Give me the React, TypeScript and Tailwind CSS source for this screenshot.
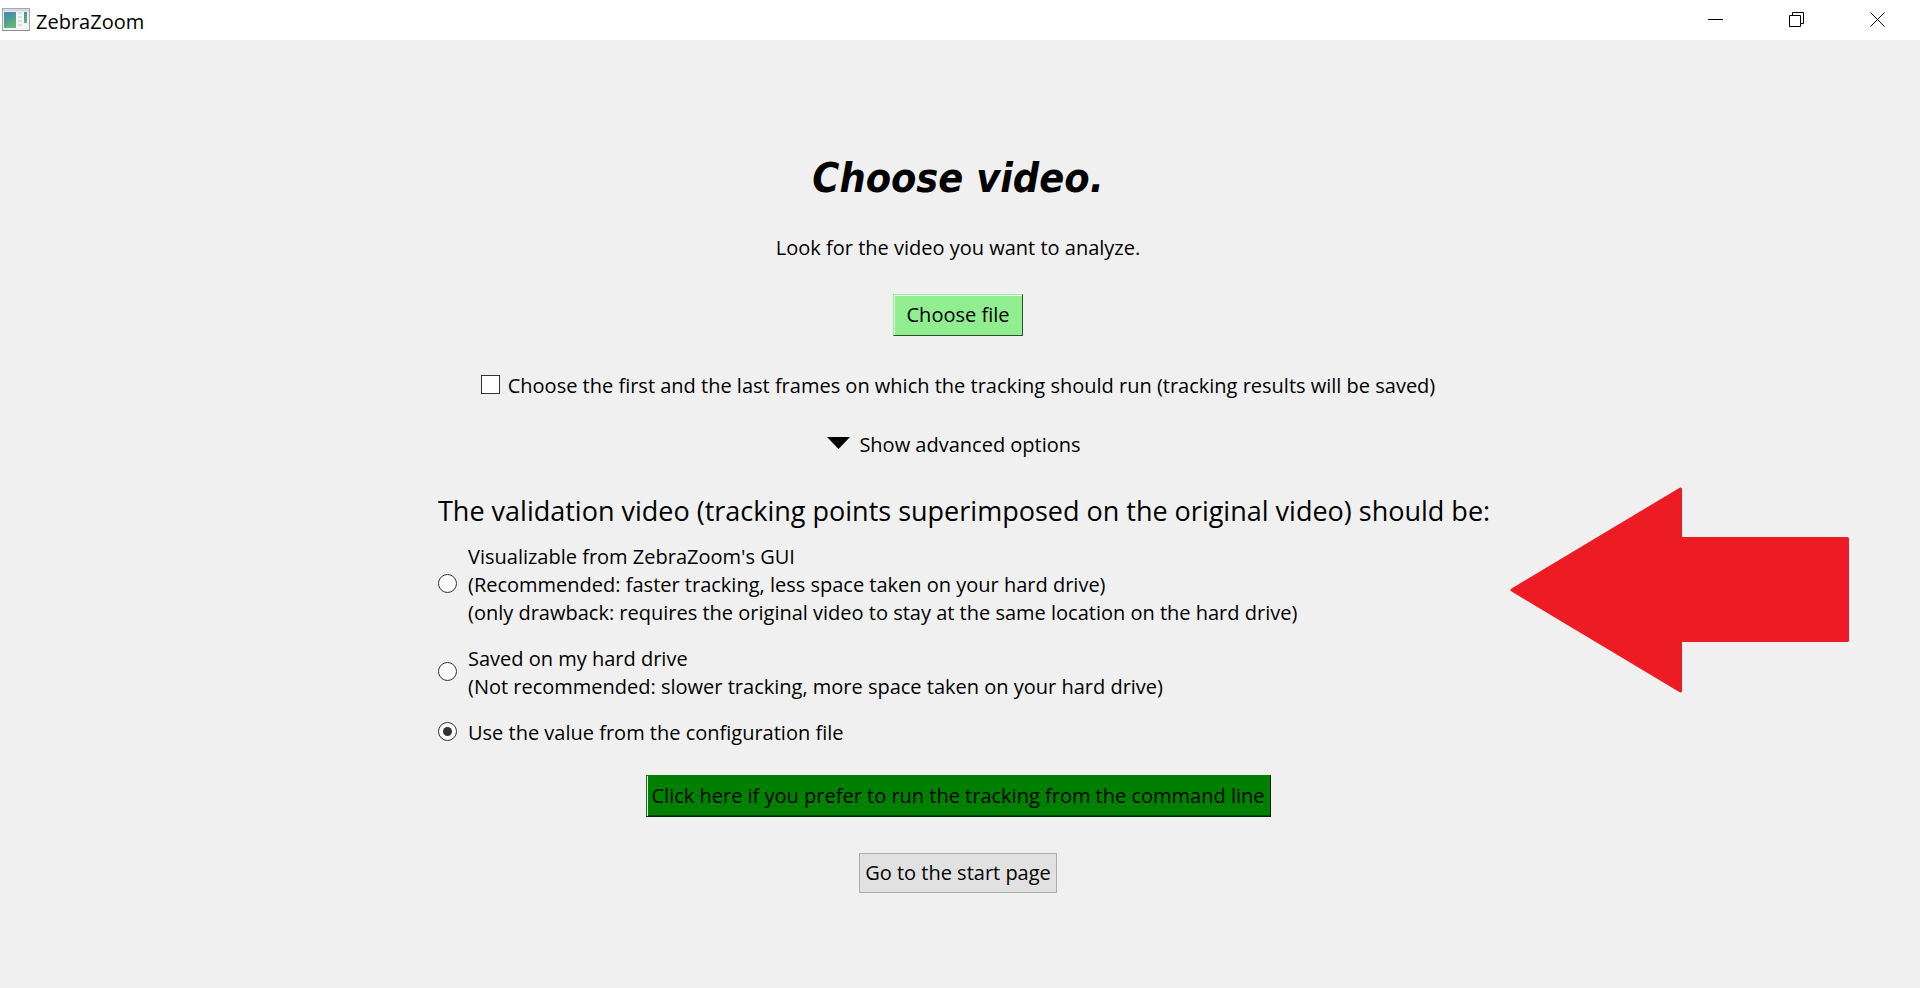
import { useState } from "react";
import type { ReactNode } from "react";

const outputModes: { id: string; lines: string[] }[] = [
  {
    id: "gui",
    lines: [
      "Visualizable from ZebraZoom's GUI",
      "(Recommended: faster tracking, less space taken on your hard drive)",
      "(only drawback: requires the original video to stay at the same location on the hard drive)",
    ],
  },
  {
    id: "disk",
    lines: [
      "Saved on my hard drive",
      "(Not recommended: slower tracking, more space taken on your hard drive)",
    ],
  },
  { id: "config", lines: ["Use the value from the configuration file"] },
];

function AppIcon() {
  return (
    <svg className="h-6 w-7" viewBox="0 0 28 24" aria-hidden="true">
      <defs>
        <linearGradient id="pane" x1="0" y1="0" x2="0.4" y2="1">
          <stop offset="0" stopColor="#4a86b4" />
          <stop offset="0.5" stopColor="#4f9c98" />
          <stop offset="1" stopColor="#62b878" />
        </linearGradient>
        <linearGradient id="frame" x1="0" y1="0" x2="0" y2="1">
          <stop offset="0" stopColor="#d6d8da" />
          <stop offset="1" stopColor="#f0f1f2" />
        </linearGradient>
      </defs>
      <rect x="0.5" y="0.5" width="27" height="22" fill="url(#frame)" stroke="#a4a8ac" />
      <rect x="1.5" y="3.5" width="25" height="18" fill="#f4f5f6" />
      <rect x="2" y="4" width="12" height="16" fill="url(#pane)" />
      <path d="M16 5h4M16 9h4M16 13h4M16 17h4" stroke="#dcdfe2" strokeWidth="2" />
      <rect x="22" y="4" width="3" height="11" fill="url(#pane)" />
      <path d="M0 22.5h28" stroke="#8d9195" />
    </svg>
  );
}

function WindowButton({ label, children }: { label: string; children: ReactNode }) {
  return (
    <button type="button" aria-label={label} className="flex h-10 w-[81px] items-center justify-center">
      <svg className="h-4 w-4" viewBox="0 0 16 16" fill="none" stroke="#000" aria-hidden="true">
        {children}
      </svg>
    </button>
  );
}

export default function App() {
  const [mode, setMode] = useState("config");
  const [pickFrames, setPickFrames] = useState(false);

  return (
    <div className="flex min-h-screen flex-col bg-[#f0f0f0] font-['Open_Sans','Noto_Sans',sans-serif] text-xl leading-7 text-black">
      <header className="flex h-10 items-center justify-between bg-white px-0.5">
        <div className="flex items-center gap-1.5">
          <AppIcon />
          <span className="pt-1">ZebraZoom</span>
        </div>
        <div className="flex">
          <WindowButton label="Minimize">
            <path d="M0 7.5h15" />
          </WindowButton>
          <WindowButton label="Restore">
            <path d="M.5 3.5h11v11H.5zM3.5 3V.5h11v11H12" />
          </WindowButton>
          <WindowButton label="Close">
            <path d="M.5.5l14 14M14.5.5l-14 14" />
          </WindowButton>
        </div>
      </header>

      <main className="flex flex-col items-center pt-[104px] pr-1 pb-10">
        <h1 className="font-['DejaVu_Sans_Condensed','DejaVu_Sans',sans-serif] text-[41px] leading-[68px] font-bold italic">
          Choose video.
        </h1>
        <p className="mt-[22px]">Look for the video you want to analyze.</p>
        <button
          type="button"
          className="mt-8 border border-t-[#90ee90] border-r-[#2f4f2f] border-b-[#2f4f2f] border-l-[#90ee90] bg-[#90ee90] px-[13px] py-1.5 shadow-[inset_1px_1px_0_#f4fff4]"
        >
          Choose file
        </button>
        <label className="mt-9 flex items-center gap-2">
          <input
            type="checkbox"
            checked={pickFrames}
            onChange={(e) => setPickFrames(e.target.checked)}
            className="mb-1 h-[19px] w-[19px] appearance-none border border-[#333] bg-white checked:bg-[#333]"
          />
          Choose the first and the last frames on which the tracking should run (tracking results will be saved)
        </label>
        <button type="button" className="mt-[31px] flex items-center gap-2 pr-2">
          <svg className="mb-1 h-3 w-6" viewBox="0 0 24 12" aria-hidden="true">
            <path d="M0 0h23L11.500 12z" />
          </svg>
          Show advanced options
        </button>

        <div className="relative mt-8 w-full max-w-[1040px]">
          <fieldset>
            <legend className="text-[27px] leading-10 whitespace-nowrap">
              The validation video (tracking points superimposed on the original video) should be:
            </legend>
            <div className="mt-3 flex flex-col items-start gap-[18px]">
              {outputModes.map((m) => (
                <label key={m.id} className="flex items-center gap-[11px]">
                  <input
                    type="radio"
                    name="output-mode"
                    checked={mode === m.id}
                    onChange={() => setMode(m.id)}
                    className="mb-1 flex h-[19px] w-[19px] appearance-none items-center justify-center rounded-full border border-[#333] bg-white before:h-[9px] before:w-[9px] before:rounded-full checked:before:bg-[#333]"
                  />
                  <span>
                    {m.lines.map((line) => (
                      <span key={line} className="block">
                        {line}
                      </span>
                    ))}
                  </span>
                </label>
              ))}
            </div>
          </fieldset>
          <svg
            className="absolute -top-1 left-full ml-8 h-[206px] w-[339px]"
            viewBox="0 0 339 206"
            fill="#ed1c24"
            stroke="#ed1c24"
            strokeWidth="3"
            strokeLinejoin="round"
            aria-hidden="true"
          >
            <path d="M2 103L170.500 2V51.500H337.500V153.500H170.500V204z" />
          </svg>
        </div>

        <button
          type="button"
          className="mt-7 border border-t-[#008000] border-r-[#002b00] border-b-[#002b00] border-l-[#008000] bg-[#008000] px-[5px] py-1.5 shadow-[inset_1px_0_0_#fff,inset_0_-1px_0_#004a00]"
        >
          Click here if you prefer to run the tracking from the command line
        </button>
        <button type="button" className="mt-9 border border-[#adadad] bg-[#e1e1e1] px-[5px] py-[5px]">
          Go to the start page
        </button>
      </main>
    </div>
  );
}
